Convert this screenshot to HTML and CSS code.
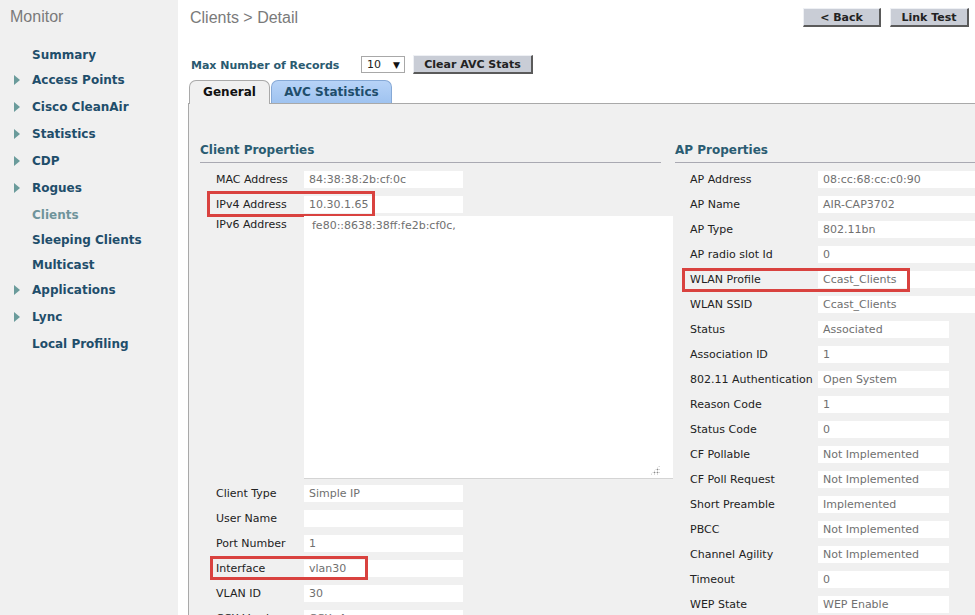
FILE: index.html
```html
<!DOCTYPE html>
<html>
<head>
<meta charset="utf-8">
<title>Clients &gt; Detail</title>
<link rel="stylesheet" href="styles.css">
</head>
<body>
<div class="page">
  <aside class="sidebar">
    <div class="side-title">Monitor</div>
    <ul class="nav">
      <li class="nav-item"><span class="arrow-slot"></span>Summary</li>
      <li class="nav-item tall"><span class="arrow-slot"><span class="arrow"></span></span>Access Points</li>
      <li class="nav-item tall"><span class="arrow-slot"><span class="arrow"></span></span>Cisco CleanAir</li>
      <li class="nav-item tall"><span class="arrow-slot"><span class="arrow"></span></span>Statistics</li>
      <li class="nav-item tall"><span class="arrow-slot"><span class="arrow"></span></span>CDP</li>
      <li class="nav-item tall"><span class="arrow-slot"><span class="arrow"></span></span>Rogues</li>
      <li class="nav-item current"><span class="arrow-slot"></span>Clients</li>
      <li class="nav-item"><span class="arrow-slot"></span>Sleeping Clients</li>
      <li class="nav-item"><span class="arrow-slot"></span>Multicast</li>
      <li class="nav-item tall"><span class="arrow-slot"><span class="arrow"></span></span>Applications</li>
      <li class="nav-item tall"><span class="arrow-slot"><span class="arrow"></span></span>Lync</li>
      <li class="nav-item"><span class="arrow-slot"></span>Local Profiling</li>
    </ul>
  </aside>
  <main class="main">
    <div class="topbar">
      <h1 class="title">Clients &gt; Detail</h1>
      <div class="actions">
        <button class="btn btn-back">&lt; Back</button>
        <button class="btn btn-link">Link Test</button>
      </div>
    </div>
    <div class="records">
      <span class="records-label">Max Number of Records</span>
      <span class="select"><span class="select-val">10</span><span class="select-arrow">&#9660;</span></span>
      <button class="btn btn-clear">Clear AVC Stats</button>
    </div>
    <div class="tabs">
      <div class="tab tab-active">General</div>
      <div class="tab tab-other">AVC Statistics</div>
    </div>
    <div class="panel">
      <section class="col col-client">
        <h2 class="sec-head">Client Properties</h2>
        <div class="row"><span class="lbl">MAC Address</span><span class="val">84:38:38:2b:cf:0c</span></div>
        <div class="row"><span class="lbl">IPv4 Address</span><span class="val">10.30.1.65</span><span class="mark mark-ipv4"></span></div>
        <div class="row row-area"><span class="lbl">IPv6 Address</span><div class="area"><span class="area-text">fe80::8638:38ff:fe2b:cf0c,</span><span class="grip"></span></div></div>
        <div class="row"><span class="lbl">Client Type</span><span class="val">Simple IP</span></div>
        <div class="row"><span class="lbl">User Name</span><span class="val"></span></div>
        <div class="row"><span class="lbl">Port Number</span><span class="val">1</span></div>
        <div class="row"><span class="lbl">Interface</span><span class="val">vlan30</span><span class="mark mark-iface"></span></div>
        <div class="row"><span class="lbl">VLAN ID</span><span class="val">30</span></div>
        <div class="row"><span class="lbl">CCX Version</span><span class="val">CCXv4</span></div>
      </section>
      <section class="col col-ap">
        <h2 class="sec-head">AP Properties</h2>
        <div class="row"><span class="lbl">AP Address</span><span class="val wide">08:cc:68:cc:c0:90</span></div>
        <div class="row"><span class="lbl">AP Name</span><span class="val wide">AIR-CAP3702</span></div>
        <div class="row"><span class="lbl">AP Type</span><span class="val wide">802.11bn</span></div>
        <div class="row"><span class="lbl">AP radio slot Id</span><span class="val wide">0</span></div>
        <div class="row"><span class="lbl">WLAN Profile</span><span class="val wide">Ccast_Clients</span><span class="mark mark-wlan"></span></div>
        <div class="row"><span class="lbl">WLAN SSID</span><span class="val wide">Ccast_Clients</span></div>
        <div class="row"><span class="lbl">Status</span><span class="val">Associated</span></div>
        <div class="row"><span class="lbl">Association ID</span><span class="val">1</span></div>
        <div class="row"><span class="lbl">802.11 Authentication</span><span class="val">Open System</span></div>
        <div class="row"><span class="lbl">Reason Code</span><span class="val">1</span></div>
        <div class="row"><span class="lbl">Status Code</span><span class="val">0</span></div>
        <div class="row"><span class="lbl">CF Pollable</span><span class="val">Not Implemented</span></div>
        <div class="row"><span class="lbl">CF Poll Request</span><span class="val">Not Implemented</span></div>
        <div class="row"><span class="lbl">Short Preamble</span><span class="val">Implemented</span></div>
        <div class="row"><span class="lbl">PBCC</span><span class="val">Not Implemented</span></div>
        <div class="row"><span class="lbl">Channel Agility</span><span class="val">Not Implemented</span></div>
        <div class="row"><span class="lbl">Timeout</span><span class="val">0</span></div>
        <div class="row"><span class="lbl">WEP State</span><span class="val">WEP Enable</span></div>
      </section>
    </div>
  </main>
</div>
</body>
</html>
```
FILE: styles.css
```css
html, body {
  margin: 0;
  padding: 0;
}
body {
  width: 975px;
  height: 615px;
  overflow: hidden;
  background: #ffffff;
  font-family: "DejaVu Sans", Verdana, sans-serif;
  font-size: 11px;
  color: #222;
}
.page {
  display: flex;
  width: 975px;
  height: 615px;
}
.sidebar {
  width: 178px;
  flex: none;
  background: #f0f0f0;
  height: 615px;
}
.side-title {
  font-family: "Liberation Sans", Arial, sans-serif;
  font-size: 16px;
  line-height: 19px;
  color: #7a7a7a;
  padding: 7px 0 0 10px;
}
.nav {
  list-style: none;
  margin: 0;
  padding: 21px 0 0 0;
}
.nav-item {
  display: flex;
  align-items: flex-start;
  height: 25px;
  line-height: 16px;
  font-weight: bold;
  font-size: 12px;
  color: #1f4e6b;
}
.nav-item.tall {
  height: 27px;
}
.nav-item.current {
  color: #6f949b;
}
.arrow-slot {
  width: 32px;
  flex: none;
  display: flex;
  align-items: center;
  height: 16px;
}
.arrow {
  margin-left: 14px;
  width: 0;
  height: 0;
  border-top: 5px solid transparent;
  border-bottom: 5px solid transparent;
  border-left: 6px solid #6a9b9b;
}
.main {
  flex: 1;
  min-width: 0;
  background: #ffffff;
}
.topbar {
  display: flex;
  justify-content: space-between;
  align-items: flex-start;
  padding: 8px 6px 0 12px;
  height: 19px;
}
.title {
  margin: 0;
  font-family: "Liberation Sans", Arial, sans-serif;
  font-weight: normal;
  font-size: 16px;
  line-height: 19px;
  color: #7a7a7a;
}
.actions {
  display: flex;
  gap: 9px;
}
.btn {
  font-family: "DejaVu Sans", Verdana, sans-serif;
  font-weight: bold;
  font-size: 11px;
  color: #222;
  background: #c9cdd6;
  border-style: solid;
  border-width: 1px 2px 2px 1px;
  border-color: #eef0f4 #5a5a5a #5a5a5a #eef0f4;
  height: 19px;
  padding: 0;
  line-height: 15px;
  text-align: center;
}
.btn-back { width: 78px; }
.btn-link { width: 79px; }
.btn-clear { width: 120px; margin-left: 8px; }
.records {
  display: flex;
  align-items: center;
  margin: 28px 0 0 13px;
  height: 19px;
}
.records-label {
  font-weight: bold;
  font-size: 11px;
  color: #2a5a70;
  width: 170px;
  padding-top: 2px;
}
.select {
  display: flex;
  align-items: center;
  justify-content: space-between;
  height: 17px;
  border: 1px solid #a8a8a8;
  background: #fff;
  padding: 0 4px 0 5px;
  box-sizing: border-box;
  width: 44px;
  font-size: 11px;
  color: #222;
}
.select-arrow {
  font-size: 9px;
  color: #111;
}
.tabs {
  display: flex;
  gap: 1px;
  margin: 6px 0 0 11px;
  height: 23px;
  position: relative;
  z-index: 1;
}
.tab {
  box-sizing: border-box;
  height: 24px;
  border: 1px solid #a9a9a9;
  border-bottom: none;
  border-radius: 7px 7px 0 0;
  font-weight: bold;
  font-size: 12px;
  line-height: 22px;
  text-align: center;
}
.tab-active {
  width: 81px;
  background: #f0f0f0;
  color: #111;
}
.tab-other {
  width: 121px;
  height: 23px;
  background: linear-gradient(#b7d3f7, #9fc3f0);
  border-color: #86a9d6;
  color: #1f4e6b;
}
.panel {
  display: flex;
  margin-left: 10px;
  width: 900px;
  height: 520px;
  background: #f0f0f0;
  border-top: 1px solid #a9a9a9;
  border-left: 1px solid #a9a9a9;
  padding-top: 38px;
  box-sizing: border-box;
}
.col {
  flex: none;
}
.col-client {
  width: 486px;
  padding-left: 11px;
  box-sizing: border-box;
}
.col-ap {
  width: 330px;
}
.sec-head {
  margin: 0 0 4px 0;
  font-size: 12px;
  line-height: 16px;
  font-weight: bold;
  color: #2a5c72;
  padding-bottom: 4px;
  border-bottom: 1px solid #a9a9b2;
}
.col-client .sec-head {
  margin-right: 14px;
}
.row {
  display: flex;
  align-items: center;
  height: 25px;
  position: relative;
}
.lbl {
  flex: none;
  box-sizing: border-box;
  font-size: 11px;
  color: #222;
}
.col-client .lbl {
  width: 104px;
  padding-left: 16px;
}
.col-ap .lbl {
  width: 143px;
  padding-left: 15px;
}
.val {
  flex: none;
  box-sizing: border-box;
  height: 17px;
  line-height: 17px;
  background: #fff;
  color: #707070;
  padding-left: 5px;
  font-size: 11px;
}
.col-client .val {
  width: 159px;
}
.col-ap .val {
  width: 131px;
}
.col-ap .val.wide {
  width: 200px;
}
.row-area {
  height: 264px;
  align-items: flex-start;
}
.row-area .lbl {
  margin-top: 1px;
  line-height: 14px;
}
.area {
  position: relative;
  flex: none;
  width: 369px;
  height: 263px;
  margin-top: -1px;
  background: #fff;
  border-bottom: 1px solid #d4d4d4;
  box-sizing: border-box;
}
.area-text {
  display: block;
  padding: 3px 0 0 8px;
  color: #707070;
  font-size: 11px;
  line-height: 14px;
}
.grip {
  position: absolute;
  right: 13px;
  bottom: 3px;
  width: 10px;
  height: 10px;
  background:
    radial-gradient(circle, #8a8a8a 0.8px, transparent 1.1px) 0 0 / 3px 3px;
  clip-path: polygon(100% 0, 100% 100%, 0 100%);
}
.mark {
  position: absolute;
  border: 3px solid #d9423f;
  box-sizing: border-box;
}
.mark-ipv4 {
  left: 7px;
  top: -1px;
  width: 168px;
  height: 26px;
}
.mark-iface {
  left: 10px;
  top: 0;
  width: 158px;
  height: 24px;
}
.mark-wlan {
  left: 7px;
  top: 1px;
  width: 228px;
  height: 24px;
}
```
